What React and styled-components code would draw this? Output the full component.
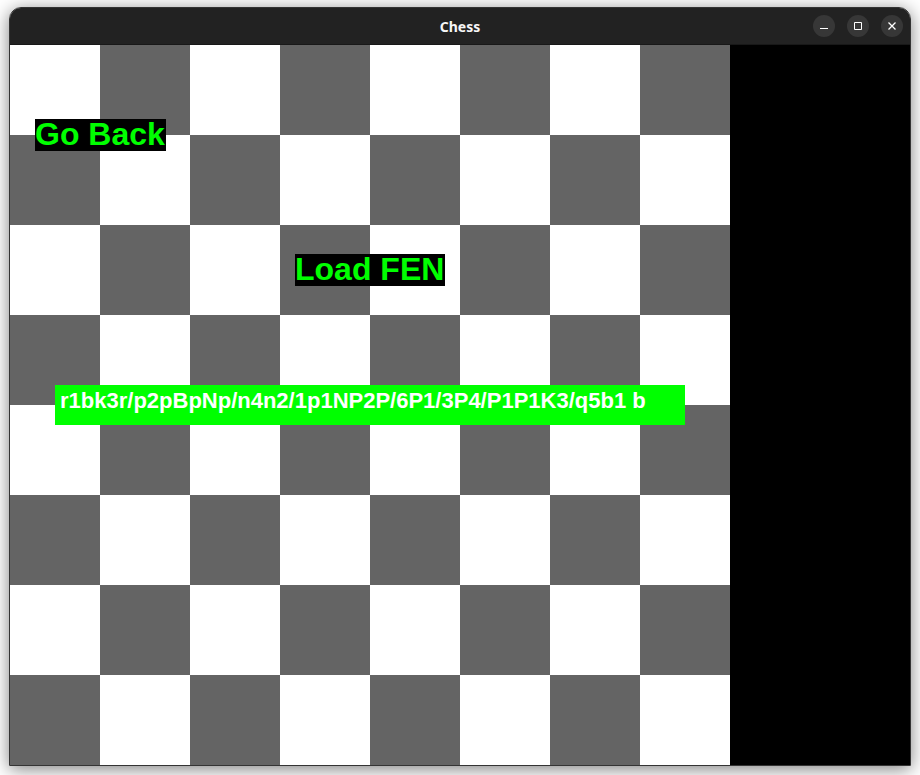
import React, { useState } from "react";
import styled, { createGlobalStyle } from "styled-components";

const GlobalStyle = createGlobalStyle`
  *, *::before, *::after { box-sizing: border-box; }
  body { margin: 0; background: #ffffff; }
`;

const Desktop = styled.div`
  padding: 7px 9px 9px;
  overflow: hidden;
`;

const Window = styled.main`
  border: 1px solid #343434;
  border-radius: 12px 12px 0 0;
  overflow: hidden;
  box-shadow: 0 3px 18px rgba(0, 0, 0, 0.5);
`;

const TitleBar = styled.header`
  display: grid;
  grid-template-columns: 1fr auto 1fr;
  align-items: center;
  height: 37px;
  padding: 0 7px;
  background: #222222;
  border-bottom: 1px solid #181818;
`;

const Title = styled.h1`
  grid-column: 2;
  margin: 0;
  padding-top: 2px;
  color: #f7f7f7;
  font: 700 14px/20px "Noto Sans", "Open Sans", sans-serif;
`;

const Controls = styled.div`
  display: flex;
  justify-content: flex-end;
  gap: 12px;
`;

const ControlButton = styled.button`
  display: grid;
  place-items: center;
  width: 22px;
  height: 22px;
  padding: 0;
  border: 0;
  border-radius: 50%;
  background: #373737;
  color: #ffffff;

  svg { display: block; }
`;

const Content = styled.div`
  display: grid;
  grid-template-columns: 4fr 1fr;
  background: #000000;
`;

const BoardArea = styled.section`
  position: relative;
`;

const Board = styled.div`
  display: grid;
  grid-template-columns: repeat(8, 1fr);
`;

const Square = styled.div`
  aspect-ratio: 1;
  background: ${({ $dark }) => ($dark ? "#646464" : "#ffffff")};
`;

const BoardButton = styled.button`
  position: absolute;
  left: ${({ $left }) => $left}px;
  top: ${({ $top }) => $top}px;
  padding: 0 1px 2px 0;
  border: 0;
  background: #000000;
  color: #00ff00;
  font: 700 32px/30px "Liberation Sans", Arial, sans-serif;
  white-space: nowrap;
`;

const FenInput = styled.input`
  position: absolute;
  left: 45px;
  right: 45px;
  top: 340px;
  height: 40px;
  padding: 1px 5px 9px;
  border: 0;
  border-radius: 0;
  outline: 0;
  background: #00ff00;
  color: #ffffff;
  font: 700 22px/30px "Liberation Sans", Arial, sans-serif;
`;

const squares = Array.from({ length: 64 }, (_, i) => ({
  id: i,
  dark: (Math.floor(i / 8) + (i % 8)) % 2 === 1,
}));

const controls = [
  { label: "Minimize", path: "M4 10.5h8" },
  { label: "Maximize", path: "M4.5 4.5h7v7h-7z" },
  { label: "Close", path: "M4.5 4.5l7 7M11.5 4.5l-7 7" },
];

export default function App() {
  const [fen, setFen] = useState(
    "r1bk3r/p2pBpNp/n4n2/1p1NP2P/6P1/3P4/P1P1K3/q5b1 b"
  );

  return (
    <>
      <GlobalStyle />
      <Desktop>
        <Window>
          <TitleBar>
            <Title>Chess</Title>
            <Controls>
              {controls.map(({ label, path }) => (
                <ControlButton key={label} type="button" aria-label={label}>
                  <svg width="16" height="16" viewBox="0 0 16 16" fill="none" stroke="currentColor" aria-hidden="true">
                    <path d={path} strokeWidth={label === "Close" ? 1.3 : 1} />
                  </svg>
                </ControlButton>
              ))}
            </Controls>
          </TitleBar>
          <Content>
            <BoardArea>
              <Board>
                {squares.map(({ id, dark }) => (
                  <Square key={id} $dark={dark} />
                ))}
              </Board>
              <BoardButton type="button" $left={25} $top={74}>Go Back</BoardButton>
              <BoardButton type="button" $left={285} $top={209}>Load FEN</BoardButton>
              <FenInput
                aria-label="FEN"
                spellCheck={false}
                value={fen}
                onChange={(event) => setFen(event.target.value)}
              />
            </BoardArea>
          </Content>
        </Window>
      </Desktop>
    </>
  );
}
